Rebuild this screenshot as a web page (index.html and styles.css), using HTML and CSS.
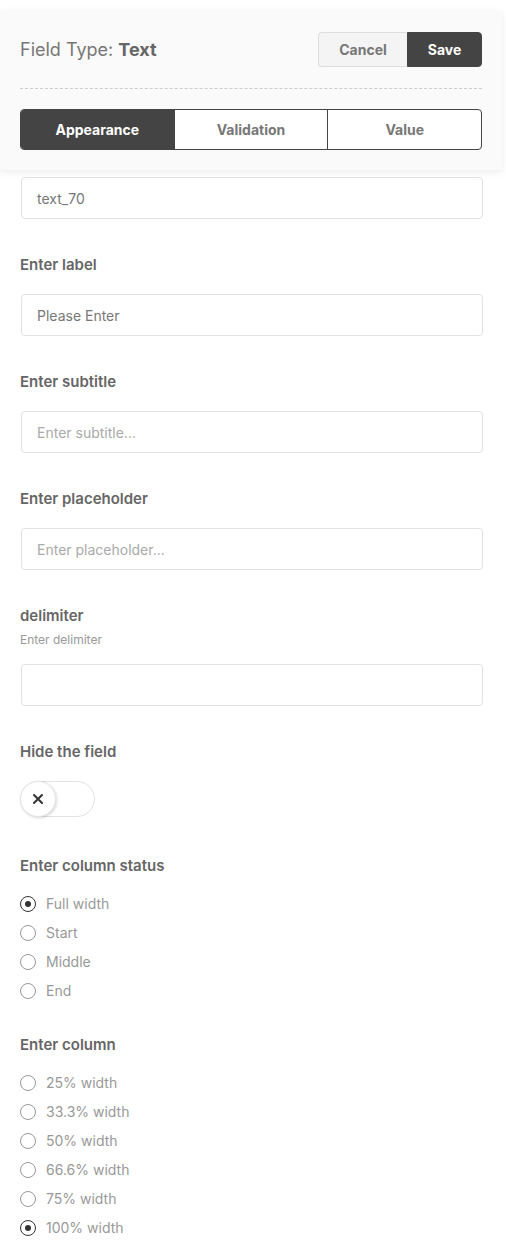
FILE: index.html
```html
<!DOCTYPE html>
<html>
<head>
<meta charset="utf-8">
<link rel="stylesheet" href="styles.css">
</head>
<body>
<div class="header">
  <div class="top-row">
    <div class="title">Field Type: <b>Text</b></div>
    <div class="actions">
      <button class="btn cancel">Cancel</button>
      <button class="btn save">Save</button>
    </div>
  </div>
  <div class="sep"></div>
  <div class="tabs">
    <div class="tab active">Appearance</div>
    <div class="tab">Validation</div>
    <div class="tab">Value</div>
  </div>
</div>
<div class="content">
  <input class="field first" value="text_70">

  <div class="label">Enter label</div>
  <input class="field" value="Please Enter">

  <div class="label">Enter subtitle</div>
  <input class="field" placeholder="Enter subtitle...">

  <div class="label">Enter placeholder</div>
  <input class="field" placeholder="Enter placeholder...">

  <div class="label">delimiter</div>
  <div class="hint">Enter delimiter</div>
  <input class="field after-hint">

  <div class="label">Hide the field</div>
  <div class="toggle">
    <div class="knob">
      <svg width="12" height="12" viewBox="0 0 12 12"><path d="M2 2L10 10M10 2L2 10" stroke="#333" stroke-width="2" stroke-linecap="round"/></svg>
    </div>
  </div>

  <div class="label after-toggle">Enter column status</div>
  <div class="radios">
    <div class="radio checked"><span class="circle"></span>Full width</div>
    <div class="radio"><span class="circle"></span>Start</div>
    <div class="radio"><span class="circle"></span>Middle</div>
    <div class="radio"><span class="circle"></span>End</div>
  </div>

  <div class="label after-radios">Enter column</div>
  <div class="radios">
    <div class="radio"><span class="circle"></span>25% width</div>
    <div class="radio"><span class="circle"></span>33.3% width</div>
    <div class="radio"><span class="circle"></span>50% width</div>
    <div class="radio"><span class="circle"></span>66.6% width</div>
    <div class="radio"><span class="circle"></span>75% width</div>
    <div class="radio checked"><span class="circle"></span>100% width</div>
  </div>
</div>
</body>
</html>
```
FILE: styles.css
```css
* { box-sizing: border-box; }
body {
  margin: 0;
  font-family: Inter, "Noto Sans", sans-serif;
  background: #fff;
  color: #666;
}
.header {
  margin-top: 11px;
  width: 502px;
  background: #fafafa;
  box-shadow: 0 2px 8px rgba(0,0,0,0.08);
  padding: 21px 20px 20px 20px;
}
.top-row {
  display: flex;
  justify-content: space-between;
  align-items: center;
  height: 35px;
}
.title {
  font-size: 18px;
  color: #777;
}
.title b { color: #666; font-weight: 700; }
.actions { display: flex; }
.btn {
  font-family: inherit;
  font-size: 14px;
  font-weight: 700;
  height: 35px;
  border: 1px solid #ddd;
  margin: 0;
}
.cancel {
  width: 89px;
  background: #f4f4f4;
  color: #777;
  border-radius: 4px 0 0 4px;
  border-right: none;
}
.save {
  width: 75px;
  background: #444;
  border-color: #444;
  color: #fff;
  border-radius: 0 4px 4px 0;
}
.sep {
  margin-top: 21px;
  border-top: 1px dashed #ccc;
}
.tabs {
  margin-top: 20px;
  display: flex;
  height: 41px;
  border: 1px solid #444;
  border-radius: 4px;
  overflow: hidden;
  background: #fff;
}
.tab {
  flex: 1;
  display: flex;
  align-items: center;
  justify-content: center;
  font-size: 14px;
  font-weight: 700;
  color: #777;
  border-left: 1px solid #444;
}
.tab:first-child { border-left: none; }
.tab.active { background: #444; color: #fff; }
.content {
  padding: 7px 23px 20px 21px;
}
.field {
  display: block;
  width: 462px;
  height: 42px;
  border: 1px solid #e2e2e2;
  border-radius: 4px;
  padding: 0 15px;
  font-family: inherit;
  font-size: 14px;
  color: #777;
  background: #fff;
  outline: none;
  margin: 19px 0 0 0;
}
.field.first { margin-top: 0; }
.field::placeholder { color: #aaa; }
.label {
  margin-top: 36px;
  font-size: 15px;
  line-height: 20px;
  font-weight: 600;
  color: #666;
  margin-left: -1px;
}
.hint {
  margin-top: 6px;
  font-size: 12px;
  line-height: 16px;
  color: #999;
  margin-left: -1px;
}
.field.after-hint { margin-top: 16px; }
.toggle {
  margin-top: 19px;
  margin-left: -1px;
  width: 75px;
  height: 36px;
  border: 1px solid #e2e2e2;
  border-radius: 18px;
  background: #fff;
  position: relative;
}
.knob {
  position: absolute;
  left: -1px;
  top: -1px;
  width: 36px;
  height: 36px;
  border-radius: 50%;
  background: #fff;
  border: 1px solid #e6e6e6;
  box-shadow: 1px 1px 3px rgba(0,0,0,0.15);
  display: flex;
  align-items: center;
  justify-content: center;
}
.knob svg { display: block; }
.label.after-toggle { margin-top: 39px; }
.label.after-radios { margin-top: 30px; }
.radios {
  margin-top: 13px;
  margin-left: -1px;
}
.radio {
  display: flex;
  align-items: center;
  height: 29px;
  font-size: 14px;
  color: #999;
}
.circle {
  width: 16px;
  height: 16px;
  border-radius: 50%;
  border: 1px solid #999;
  margin-right: 10px;
  display: flex;
  align-items: center;
  justify-content: center;
  background: #fff;
}
.radio.checked .circle { border-color: #333; }
.radio.checked .circle::after {
  content: "";
  width: 6px;
  height: 6px;
  border-radius: 50%;
  background: #333;
}
```
